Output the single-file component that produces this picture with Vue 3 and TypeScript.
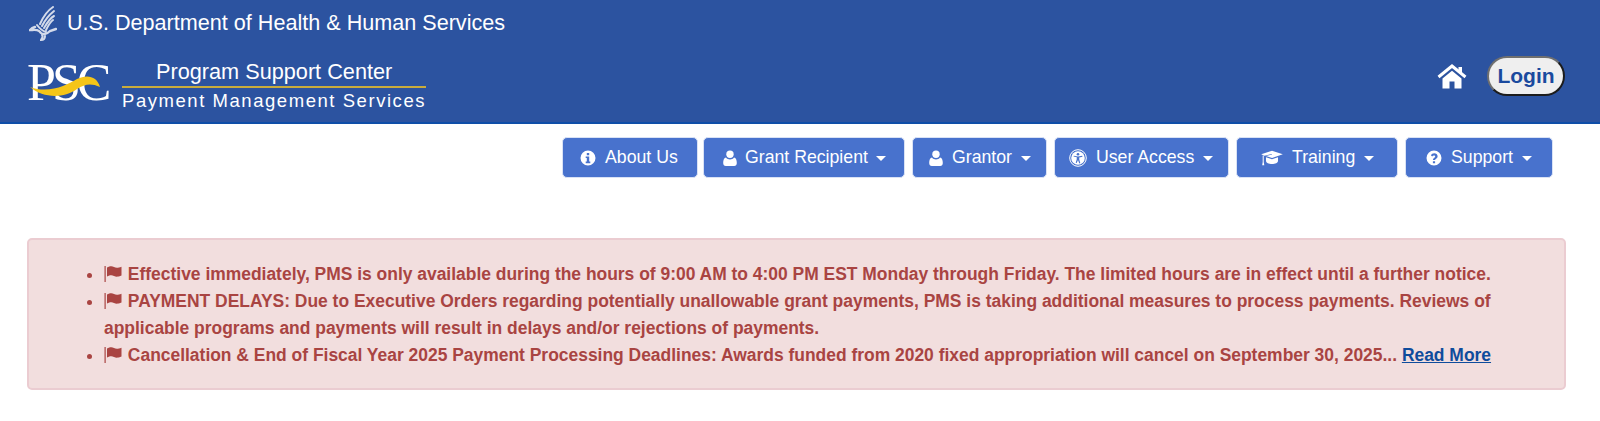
<script setup lang="ts">
interface NavItem { label: string; icon: string; caret: boolean; width: number; left: number; gap: number }
const nav: NavItem[] = [
  { label: 'About Us', icon: 'info', caret: false, width: 136, left: 17, gap: 9 },
  { label: 'Grant Recipient', icon: 'user', caret: true, width: 202, left: 19, gap: 8 },
  { label: 'Grantor', icon: 'user', caret: true, width: 135, left: 16, gap: 9 },
  { label: 'User Access', icon: 'access', caret: true, width: 175, left: 14, gap: 9 },
  { label: 'Training', icon: 'cap', caret: true, width: 162, left: 24, gap: 9 },
  { label: 'Support', icon: 'help', caret: true, width: 148, left: 20, gap: 9 }
]
const notices = [
  { text: 'Effective immediately, PMS is only available during the hours of 9:00 AM to 4:00 PM EST Monday through Friday. The limited hours are in effect until a further notice.', more: false },
  { text: 'PAYMENT DELAYS: Due to Executive Orders regarding potentially unallowable grant payments, PMS is taking additional measures to process payments. Reviews of applicable programs and payments will result in delays and/or rejections of payments.', more: false },
  { text: 'Cancellation & End of Fiscal Year 2025 Payment Processing Deadlines: Awards funded from 2020 fixed appropriation will cancel on September 30, 2025...', more: true }
]
</script>

<template>
  <div class="page">
    <header class="banner">
      <div class="dept">
        <svg class="eagle" viewBox="0 0 28 35" width="28" height="35" fill="none" stroke="#d3daea" stroke-linecap="round">
          <path d="M24 1 C18 5 14 11 11 18" stroke-width="2" />
          <path d="M25 5 C20 9 16 14 13 20" stroke-width="2" />
          <path d="M25 10 C21 12 18 17 15 22" stroke-width="2" />
          <path d="M24 14 C21 16 19 20 17 24" stroke-width="2" />
          <path d="M6 21 C3 22 2 23 1 24 C6 24 9 23 12 27 C14 29 18 28 21 25 L27 23" stroke-width="2.400" />
          <path d="M8 19 C11 23 14 25 17 26" stroke-width="2" />
          <path d="M13 29 C15 31 12 33 12 34 C14 34 16 33 16 30" stroke-width="2" />
        </svg>
        <span class="dept-name">U.S. Department of Health &amp; Human Services</span>
      </div>
      <div class="brand-row">
        <div class="brand">
          <div class="psc">
            <span class="psc-letters">PSC</span>
            <svg class="swoosh" viewBox="0 0 82 30" width="82" height="30">
              <path d="M1 15 C14 26 34 27 48 17 C56 12 62 11 71 15 C68 4 58 2 48 7 C38 13 20 22 1 15 Z" fill="#f5c518" />
            </svg>
          </div>
          <div class="titles">
            <div class="title-top">Program Support Center</div>
            <div class="title-bottom">Payment Management Services</div>
          </div>
        </div>
        <div class="actions">
          <svg class="home" viewBox="0 0 30 25" width="30" height="25" aria-label="Home">
            <path d="M1.500 13 L15 2 L28.500 13" fill="none" stroke="#fff" stroke-width="3" />
            <path d="M21.500 3 H25 V9 L21.500 6 Z" fill="#fff" />
            <path d="M5.500 14.500 L15 6.800 L24.500 14.500 V24.500 H17.500 V17.500 H12.500 V24.500 H5.500 Z" fill="#fff" />
          </svg>
          <button class="login">Login</button>
        </div>
      </div>
    </header>

    <nav class="nav">
      <button
        v-for="item in nav"
        :key="item.label"
        class="nav-btn"
        :style="{ width: item.width + 'px', paddingLeft: item.left + 'px', columnGap: item.gap + 'px' }"
      >
        <svg v-if="item.icon === 'info'" class="ico" viewBox="0 0 16 16" width="16" height="16">
          <path fill="#fff" fill-rule="evenodd" d="M8 .5a7.500 7.500 0 1 0 0 15 7.500 7.500 0 0 0 0-15ZM6.800 2.900h2.400v2.300H6.800ZM5.700 6.400h3.500v5.200h1.100v1.600H5.700v-1.600h1.100V8H5.700Z" />
        </svg>
        <svg v-else-if="item.icon === 'user'" class="ico" viewBox="0 0 14 16" width="14" height="16">
          <circle cx="7" cy="4.200" r="3.700" fill="#fff" />
          <path fill="#fff" d="M3 7.600C4 9 5.400 9.500 7 9.500S10 9 11 7.600c2 .4 2.800 2.600 2.800 5.400 0 1.800-1 3-2.600 3H2.800C1.200 16 .2 14.800 .2 13c0-2.800.8-5 2.800-5.400Z" />
        </svg>
        <svg v-else-if="item.icon === 'access'" class="ico" viewBox="0 0 18 18" width="18" height="18">
          <circle cx="9" cy="9" r="8.300" fill="none" stroke="#fff" stroke-width="1" />
          <circle cx="9" cy="9" r="6.800" fill="#fff" />
          <circle cx="9" cy="5.200" r="1.300" fill="#4872cd" />
          <path fill="#4872cd" d="M4.800 6.700 9 7.500l4.200-.8.300 1-3.300.9.100 2.200 1 3.300-1 .3L9 10.900l-1.300 3.200-1-.3 1-3.300.1-2.200-3.300-.9Z" />
        </svg>
        <svg v-else-if="item.icon === 'cap'" class="ico" viewBox="0 0 22 16" width="22" height="16">
          <path fill="#fff" d="M11 .8 21.800 4.300 11 7.900 5 5.900l6-1.400-.3-.6L3.500 5.800.2 4.300Z" />
          <path fill="#fff" d="M5 7.300 11 9.300l6-2v3.600c0 1.700-2.800 3-6 3s-6-1.300-6-3Z" />
          <path fill="#fff" d="M1.700 5.500h1V12l.6 3.300H1.200L1.700 12Z" />
        </svg>
        <svg v-else class="ico" viewBox="0 0 16 16" width="16" height="16">
          <path fill="#fff" fill-rule="evenodd" d="M8 .5a7.500 7.500 0 1 0 0 15 7.500 7.500 0 0 0 0-15ZM6.900 11.200h2.200v2.100H6.900Zm0-1.100c0-2.300 2.300-2.300 2.300-3.700 0-.7-.5-1-1.200-1-.8 0-1.300.4-1.800 1L4.900 5.300C5.600 4 6.700 3.200 8.200 3.200c2 0 3.400 1.100 3.400 3 0 2.400-2.500 2.500-2.500 3.900Z" />
        </svg>
        <span class="nav-label">{{ item.label }}</span>
        <span v-if="item.caret" class="caret"></span>
      </button>
    </nav>

    <section class="alert">
      <ul class="notices">
        <li v-for="(n, i) in notices" :key="i">
          <svg class="flag" viewBox="0 0 18 16" width="18" height="16">
            <rect x="0.500" y="0" width="1.200" height="16" fill="#a94442" />
            <path fill="#a94442" d="M3 1.500C6 0 8 0 10 1s4 1 7.500-.3V9.500C14 11 12 11 10 10S6 9 3 10.500Z" />
          </svg>
          {{ ' ' + n.text }}
          <a v-if="n.more" class="more" href="#">Read More</a>
        </li>
      </ul>
    </section>
  </div>
</template>

<style>
html, body { margin: 0; background: #fff; }
</style>

<style scoped>
.page { font-family: "Liberation Sans", Arial, sans-serif; height: 421px; overflow: hidden; }
.banner {
  background: #2c53a0;
  border-bottom: 2px solid #0f4ea8;
  height: 124px;
  box-sizing: border-box;
  padding: 3px 35px 0 29px;
}
.dept { display: flex; align-items: center; height: 40px; color: #fff; }
.eagle { margin-right: 10px; margin-top: 1px; }
.dept-name { font-size: 21.600px; }
.brand-row { display: flex; justify-content: space-between; align-items: flex-start; margin-top: 15px; }
.brand { display: flex; align-items: flex-start; }
.psc { position: relative; width: 85px; height: 50px; margin-left: -2px; }
.psc-letters {
  font-family: "Liberation Serif", serif;
  font-size: 52px;
  line-height: 50px;
  letter-spacing: -4px;
  color: #fff;
  display: block;
}
.swoosh { position: absolute; left: 2px; top: 14px; }
.titles { width: 304px; margin-left: 10px; color: #fff; }
.title-top {
  font-size: 21.700px;
  line-height: 27px;
  height: 28px;
  padding-left: 34px;
  border-bottom: 2px solid #c9ac3c;
  white-space: nowrap;
}
.title-bottom { font-size: 18.500px; letter-spacing: 1.550px; line-height: 24px; white-space: nowrap; margin-top: 1px; }
.actions { display: flex; align-items: center; gap: 20px; margin-top: -2px; }
.home { margin-top: 1px; }
.login {
  width: 78px;
  height: 40px;
  border-radius: 20px;
  border: 2px solid;
  border-color: #6f6f6f #1c1c1c #1c1c1c #6f6f6f;
  background: #efefef;
  color: #1a4a9e;
  font: bold 21px "Liberation Sans", Arial, sans-serif;
  padding: 0;
}
.nav { display: flex; justify-content: flex-end; gap: 7px; padding: 13px 47px 0 0; }
.nav-btn {
  height: 41px;
  display: flex;
  align-items: center;
  box-sizing: border-box;
  padding-right: 0;
  background: #4872cd;
  border: 1px solid #d9e2f5;
  border-radius: 5px;
  color: #fff;
  font: 17.700px "Liberation Sans", Arial, sans-serif;
  white-space: nowrap;
}
.nav-btn:first-child { margin-right: -2px; }
.ico { flex: none; }
.caret {
  width: 0;
  height: 0;
  border-left: 5px solid transparent;
  border-right: 5px solid transparent;
  border-top: 5px solid #fff;
  margin-top: 2px;
}
.alert {
  margin: 60px 34px 0 27px;
  height: 152px;
  box-sizing: border-box;
  background: #f2dede;
  border: 2px solid #ebccd1;
  border-radius: 5px;
  color: #a94442;
  font-weight: bold;
  font-size: 17.450px;
  line-height: 27px;
  padding: 21px 40px 0 0;
}
.notices { margin: 0; padding-left: 75px; }
.flag { vertical-align: -2px; margin-right: 1px; }
.more { color: #0f4c9c; text-decoration: underline; }
</style>
